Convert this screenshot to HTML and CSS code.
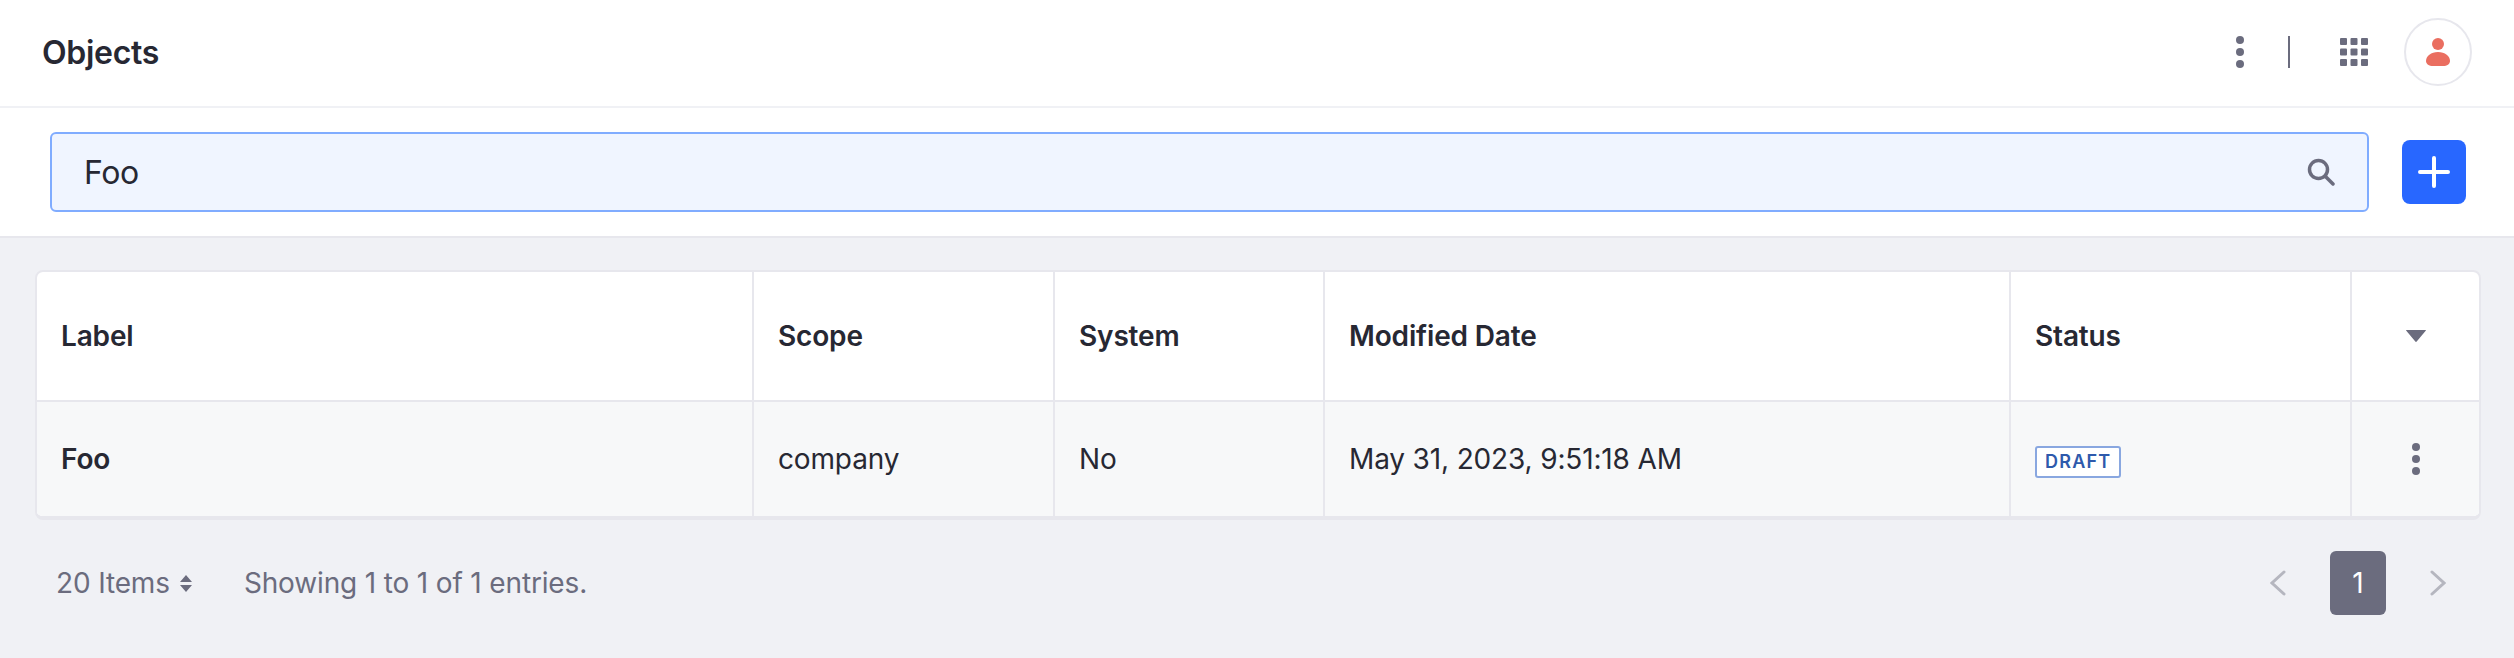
FILE: index.html
```html
<!DOCTYPE html>
<html lang="en">
<head>
    <meta charset="UTF-8">
    <title>Objects</title>
    <link rel="stylesheet" href="styles.css">
</head>
<body>
    <header class="topbar">
        <h1 class="title">Objects</h1>
        <div class="topbar-actions">
            <svg class="icon-dots" width="8" height="32" viewBox="0 0 8 32"><circle cx="4" cy="4" r="4"/><circle cx="4" cy="16" r="4"/><circle cx="4" cy="28" r="4"/></svg>
            <span class="divider"></span>
            <svg class="icon-apps" width="28" height="28" viewBox="0 0 28 28"><rect width="7" height="7" rx="1"/><rect x="10.5" width="7" height="7" rx="1"/><rect x="21" width="7" height="7" rx="1"/><rect y="10.5" width="7" height="7" rx="1"/><rect x="10.5" y="10.5" width="7" height="7" rx="1"/><rect x="21" y="10.5" width="7" height="7" rx="1"/><rect y="21" width="7" height="7" rx="1"/><rect x="10.5" y="21" width="7" height="7" rx="1"/><rect x="21" y="21" width="7" height="7" rx="1"/></svg>
            <div class="avatar">
                <svg width="24" height="28" viewBox="0 0 24 28"><circle cx="12" cy="6" r="6"/><path d="M12 14c7 0 12 4 12 9 0 3-3 5-7 5H7c-4 0-7-2-7-5 0-5 5-9 12-9z"/></svg>
            </div>
        </div>
    </header>

    <div class="searchbar">
        <div class="search-input">
            <span class="search-text">Foo</span>
            <svg class="icon-search" width="28" height="28" viewBox="0 0 28 28"><circle cx="11.5" cy="11.5" r="9" /><path d="M18 18l8 8"/></svg>
        </div>
        <button class="add-button">
            <svg width="32" height="32" viewBox="0 0 32 32"><path d="M16 2v28M2 16h28"/></svg>
        </button>
    </div>

    <main class="content">
        <div class="table-card">
            <table class="objects-table">
                <colgroup>
                    <col class="col-label">
                    <col class="col-scope">
                    <col class="col-system">
                    <col class="col-date">
                    <col class="col-status">
                    <col class="col-actions">
                </colgroup>
                <thead>
                    <tr>
                        <th>Label</th>
                        <th>Scope</th>
                        <th>System</th>
                        <th>Modified Date</th>
                        <th>Status</th>
                        <th class="cell-center">
                            <svg class="icon-caret" width="20" height="12" viewBox="0 0 20 12"><path d="M.5 0h19c.5 0 .5.5.2.8L10.700 11.500c-.4.500-1 .500-1.400 0L.3.800C0 .5 0 0 .5 0z"/></svg>
                        </th>
                    </tr>
                </thead>
                <tbody>
                    <tr>
                        <td class="cell-strong">Foo</td>
                        <td>company</td>
                        <td>No</td>
                        <td>May 31, 2023, 9:51:18 AM</td>
                        <td><span class="label-draft">DRAFT</span></td>
                        <td class="cell-center">
                            <svg class="icon-dots" width="8" height="32" viewBox="0 0 8 32"><circle cx="4" cy="4" r="4"/><circle cx="4" cy="16" r="4"/><circle cx="4" cy="28" r="4"/></svg>
                        </td>
                    </tr>
                </tbody>
            </table>
        </div>

        <div class="pagination-bar">
            <div class="pagination-info">
                <span class="items-select">20 Items
                    <svg class="icon-sort" width="12" height="17" viewBox="0 0 12 17"><path d="M6 0l6 7H0zM6 17L0 10h12z"/></svg>
                </span>
                <span class="entries">Showing 1 to 1 of 1 entries.</span>
            </div>
            <div class="pager">
                <svg class="icon-chevron" width="16" height="26" viewBox="0 0 16 26"><path d="M14 2L2 13l12 11"/></svg>
                <span class="page-current">1</span>
                <svg class="icon-chevron" width="16" height="26" viewBox="0 0 16 26"><path d="M2 2l12 11L2 24"/></svg>
            </div>
        </div>
    </main>
</body>
</html>
```

FILE: styles.css
```css
/* General */
body {
    font-family: 'Inter', 'Liberation Sans', sans-serif;
    margin: 0;
    padding: 0;
    background-color: #f0f1f5;
    color: #272833;
    height: 658px;
    overflow: hidden;
}

/* Top bar */
.topbar {
    display: flex;
    align-items: center;
    justify-content: space-between;
    height: 104px;
    padding: 0 42px 2px 42px;
    background-color: #fff;
    border-bottom: 2px solid #f0f1f5;
}

.title {
    margin: 0;
    font-size: 32px;
    font-weight: 600;
    letter-spacing: -0.3px;
}

.topbar-actions {
    display: flex;
    align-items: center;
}

.icon-dots {
    fill: #6b6c7e;
    display: block;
}

.divider {
    width: 2px;
    height: 32px;
    margin: 0 50px 0 44px;
    background-color: #6b6c7e;
}

.icon-apps {
    fill: #6b6c7e;
    margin-right: 36px;
}

.avatar {
    display: flex;
    align-items: center;
    justify-content: center;
    width: 64px;
    height: 64px;
    border: 2px solid #e7e7ed;
    border-radius: 50%;
    fill: #ea6e60;
}

/* Search */
.searchbar {
    display: flex;
    align-items: center;
    height: 128px;
    padding: 0 48px 0 50px;
    background-color: #fff;
    border-bottom: 2px solid #e7e7ed;
}

.search-input {
    display: flex;
    flex: 1;
    align-items: center;
    justify-content: space-between;
    height: 76px;
    padding: 0 32px;
    background-color: #f0f5ff;
    border: 2px solid #80acff;
    border-radius: 6px;
}

.search-text {
    font-size: 32px;
    letter-spacing: -0.4px;
}

.icon-search {
    fill: none;
    stroke: #6b6c7e;
    stroke-width: 3.500;
    stroke-linecap: round;
}

.add-button {
    display: flex;
    align-items: center;
    justify-content: center;
    width: 64px;
    height: 64px;
    margin-left: 33px;
    padding: 0;
    border: none;
    border-radius: 8px;
    background-color: #2867ff;
}

.add-button svg {
    fill: none;
    stroke: #fff;
    stroke-width: 4;
    stroke-linecap: round;
}

/* Table */
.content {
    padding: 32px 33px 0 35px;
}

.table-card {
    background-color: #fff;
    border: 2px solid #e7e7ed;
    border-bottom-width: 4px;
    border-radius: 8px;
    overflow: hidden;
}

.objects-table {
    width: 100%;
    table-layout: fixed;
    border-collapse: collapse;
    font-size: 28px;
    letter-spacing: -0.15px;
}

.col-label { width: 716px; }
.col-scope { width: 301px; }
.col-system { width: 270px; }
.col-date { width: 686px; }
.col-status { width: 341px; }

th, td {
    padding: 0 24px;
    text-align: left;
    border-right: 2px solid #e7e7ed;
}

th:last-child, td:last-child {
    border-right: none;
}

th {
    height: 128px;
    font-weight: 600;
    border-bottom: 2px solid #e7e7ed;
}

td {
    height: 114px;
    background-color: #f7f8f9;
}

.cell-strong {
    font-weight: 600;
}

.objects-table .cell-center {
    text-align: center;
}

.cell-center svg {
    display: block;
    margin: 0 auto;
}

.icon-caret {
    fill: #6b6c7e;
}

.label-draft {
    display: inline-block;
    padding: 0 8px;
    height: 28px;
    line-height: 28px;
    font-size: 18px;
    font-weight: 600;
    letter-spacing: 1.2px;
    color: #2e5aac;
    background-color: #fff;
    border: 2px solid #89a7e0;
    border-radius: 3px;
}

/* Pagination */
.pagination-bar {
    display: flex;
    align-items: center;
    justify-content: space-between;
    margin-top: 31px;
    padding: 0 35px 0 21px;
}

.pagination-info {
    display: flex;
    align-items: center;
    font-size: 28px;
    letter-spacing: -0.15px;
    color: #6b6c7e;
}

.items-select {
    display: flex;
    align-items: center;
    gap: 10px;
    margin-right: 52px;
}

.icon-sort {
    fill: #6b6c7e;
}

.pager {
    display: flex;
    align-items: center;
}

.icon-chevron {
    fill: none;
    stroke: #b5b6bf;
    stroke-width: 3;
    stroke-linecap: round;
}

.page-current {
    display: flex;
    align-items: center;
    justify-content: center;
    width: 56px;
    height: 64px;
    margin: 0 44px;
    font-size: 28px;
    color: #fff;
    background-color: #6b6c7e;
    border-radius: 6px;
}
```
